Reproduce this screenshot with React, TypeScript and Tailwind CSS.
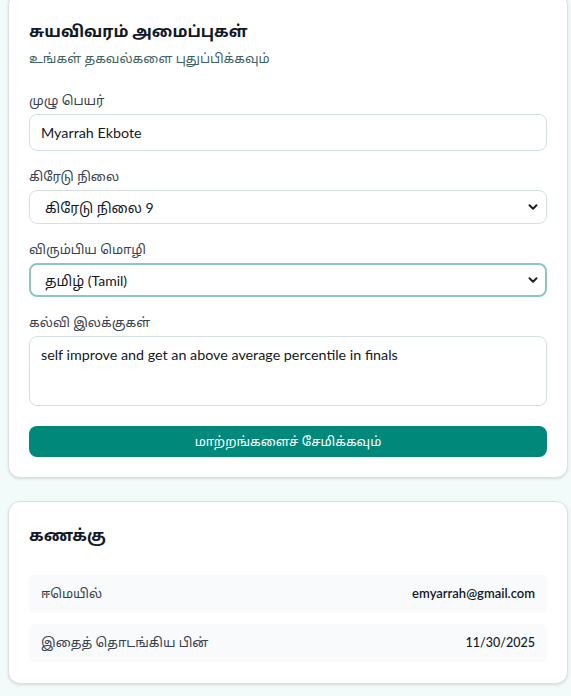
import React from "react";

const Chevron = () => (
  <svg
    className="pointer-events-none absolute right-[9px] top-1/2 -translate-y-1/2"
    width="10"
    height="10"
    viewBox="0 0 10 10"
    fill="none"
  >
    <path d="M1.5 3.2 L5 6.7 L8.5 3.2" stroke="#222" strokeWidth="2" strokeLinecap="round" strokeLinejoin="round" />
  </svg>
);

export default function App() {
  return (
    <div
      className="min-h-[696px] bg-[#f2fbfa] pl-2 pr-[3px] pb-6"
      style={{ fontFamily: 'Lato, "Noto Sans Tamil", "Noto Sans", sans-serif' }}
    >
      {/* Profile settings card */}
      <div className="-mt-[7px] rounded-xl border border-[#d3e5e3] bg-white px-5 pt-[23px] pb-5 shadow-sm">
        <h2 className="text-[16px] font-bold leading-[28px] text-[#111827]">சுயவிவரம் அமைப்புகள்</h2>
        <p className="mt-[3px] text-[13px] leading-[20px] text-[#3f6262]">உங்கள் தகவல்களை புதுப்பிக்கவும்</p>

        <div className="mt-[22px] flex flex-col gap-[15px]">
          <div>
            <label className="mb-1 block text-[13px] leading-[20px] text-[#374151]">முழு பெயர்</label>
            <input
              defaultValue="Myarrah Ekbote"
              className="block h-[37px] w-full rounded-lg border border-[#d5e0df] bg-white px-[11px] text-[14.3px] text-[#111827] outline-none"
            />
          </div>
          <div>
            <label className="mb-1 block text-[13px] leading-[20px] text-[#374151]">கிரேடு நிலை</label>
            <div className="relative">
              <select
                defaultValue="9"
                className="block h-[34px] w-full appearance-none rounded-lg border border-[#d5e0df] bg-white pl-[15px] pr-8 text-[14px] text-[#111827] outline-none"
              >
                <option value="9">கிரேடு நிலை 9</option>
              </select>
              <Chevron />
            </div>
          </div>
          <div>
            <label className="mb-1 block text-[13px] leading-[20px] text-[#374151]">விரும்பிய மொழி</label>
            <div className="relative">
              <select
                defaultValue="ta"
                className="block h-[34px] w-full appearance-none rounded-lg border-2 border-[#8cc6bf] bg-white pl-[14px] pr-8 text-[14px] text-[#111827] outline-none"
              >
                <option value="ta">தமிழ் (Tamil)</option>
              </select>
              <Chevron />
            </div>
          </div>
          <div>
            <label className="mb-1 block text-[13px] leading-[20px] text-[#374151]">கல்வி இலக்குகள்</label>
            <textarea
              defaultValue="self improve and get an above average percentile in finals"
              className="block h-[70px] w-full resize-none rounded-lg border border-[#d5e0df] bg-white px-[11px] py-2 text-[14.3px] leading-[20px] text-[#111827] outline-none"
            />
          </div>
        </div>

        <button className="mt-5 flex h-[31px] w-full items-center justify-center rounded-lg bg-[#00897b] text-[13px] text-white">
          மாற்றங்களைச் சேமிக்கவும்
        </button>
      </div>

      {/* Account card */}
      <div className="mt-[23px] rounded-xl border border-[#d3e5e3] bg-white px-5 pt-[19px] pb-[21px] shadow-sm">
        <h2 className="text-[16px] font-bold leading-[28px] text-[#111827]">கணக்கு</h2>
        <div className="mt-[26px] flex flex-col gap-[11px]">
          <div className="flex h-[38px] items-center justify-between rounded-md bg-[#f8fafb] px-3">
            <span className="text-[13px] text-[#374151]">ஈமெயில்</span>
            <span className="text-[13px] font-semibold text-[#111827]">emyarrah@gmail.com</span>
          </div>
          <div className="flex h-[38px] items-center justify-between rounded-md bg-[#f8fafb] px-3">
            <span className="text-[13px] text-[#374151]">இதைத் தொடங்கிய பின்</span>
            <span className="text-[12.5px] font-medium text-[#111827]">11/30/2025</span>
          </div>
        </div>
      </div>
    </div>
  );
}
